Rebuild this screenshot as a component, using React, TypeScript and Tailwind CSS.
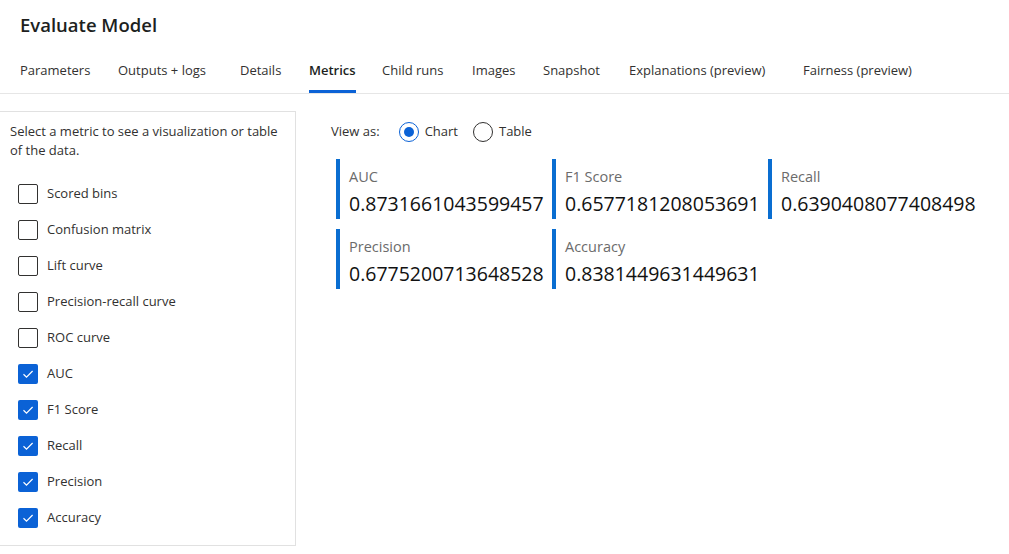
import React from "react";

// tab widths taken from the reference (text plus the space after it)
const tabs: { label: string; w: string }[] = [
  { label: "Parameters", w: "w-[98px]" },
  { label: "Outputs + logs", w: "w-[122px]" },
  { label: "Details", w: "w-[69px]" },
  { label: "Metrics", w: "w-[73px]" },
  { label: "Child runs", w: "w-[90px]" },
  { label: "Images", w: "w-[71px]" },
  { label: "Snapshot", w: "w-[86px]" },
  { label: "Explanations (preview)", w: "w-[174px]" },
  { label: "Fairness (preview)", w: "w-[140px]" },
];

const checks: { label: string; checked: boolean }[] = [
  { label: "Scored bins", checked: false },
  { label: "Confusion matrix", checked: false },
  { label: "Lift curve", checked: false },
  { label: "Precision-recall curve", checked: false },
  { label: "ROC curve", checked: false },
  { label: "AUC", checked: true },
  { label: "F1 Score", checked: true },
  { label: "Recall", checked: true },
  { label: "Precision", checked: true },
  { label: "Accuracy", checked: true },
];

const metricRows = [
  [
    { name: "AUC", value: "0.8731661043599457" },
    { name: "F1 Score", value: "0.6577181208053691" },
    { name: "Recall", value: "0.6390408077408498" },
  ],
  [
    { name: "Precision", value: "0.6775200713648528" },
    { name: "Accuracy", value: "0.8381449631449631" },
  ],
];

function Checkbox({ label, checked }: { label: string; checked: boolean }) {
  return (
    <div className="flex items-center h-[36px]">
      {checked ? (
        <span className="flex items-center justify-center w-[20px] h-[20px] rounded-[2px] bg-[#0b62d6]">
          <svg width="14" height="14" viewBox="0 0 14 14" fill="none">
            <path d="M2.5 7.3l3 2.9L11.6 4" stroke="white" strokeWidth="1.2" />
          </svg>
        </span>
      ) : (
        <span className="w-[20px] h-[20px] rounded-[2px] border border-[#323130] bg-white" />
      )}
      <span className="ml-[9px] text-[13px] text-[#323130]">{label}</span>
    </div>
  );
}

function Radio({ label, selected }: { label: string; selected: boolean }) {
  return (
    <div className="flex items-center">
      {selected ? (
        <span className="flex items-center justify-center w-[20px] h-[20px] rounded-full border border-[#0b62d6]">
          <span className="w-[10px] h-[10px] rounded-full bg-[#0b62d6]" />
        </span>
      ) : (
        <span className="w-[20px] h-[20px] rounded-full border border-[#323130]" />
      )}
      <span className="ml-[6px] text-[13px] text-[#323130]">{label}</span>
    </div>
  );
}

export default function App() {
  return (
    <div
      className="w-[1009px] h-[554px] bg-white overflow-hidden text-[#323130]"
      style={{ fontFamily: '"Open Sans", "Noto Sans", sans-serif' }}
    >
      <div className="px-[20px] pt-[11px] h-[52px]">
        <h1 className="text-[18.5px] font-semibold text-[#201f1e]">Evaluate Model</h1>
      </div>
      <div className="flex px-[20px] border-b border-[#e6e6e6] h-[42px]">
        {tabs.map((t) => (
          <div key={t.label} className={"shrink-0 " + t.w}>
            <div className="inline-flex flex-col justify-between h-full">
              <span
                className={
                  "pt-[9px] text-[13px] whitespace-nowrap " +
                  (t.label === "Metrics"
                    ? "font-semibold text-[#201f1e]"
                    : "text-[#323130]")
                }
              >
                {t.label}
              </span>
              <span
                className={
                  "h-[3px] " +
                  (t.label === "Metrics" ? "bg-[#0b62d6]" : "bg-transparent")
                }
              />
            </div>
          </div>
        ))}
      </div>
      <div className="flex pt-[17px]">
        <div className="w-[296px] h-[435px] shrink-0 border border-l-0 border-[#e1e1e1] pl-[10px] pr-[8px] pt-[10px]">
          <p className="text-[13px] leading-[19px] text-[#323130]">
            Select a metric to see a visualization or table of the data.
          </p>
          <div className="mt-[16px] pl-[8px]">
            {checks.map((c) => (
              <Checkbox key={c.label} label={c.label} checked={c.checked} />
            ))}
          </div>
        </div>
        <div className="pl-[35px] pt-[11px]">
          <div className="flex items-center h-[20px]">
            <span className="text-[13px] text-[#323130] mr-[19px]">View as:</span>
            <Radio label="Chart" selected />
            <div className="ml-[15px]">
              <Radio label="Table" selected={false} />
            </div>
          </div>
          <div className="mt-[17px] ml-[5px] flex flex-col gap-[10px]">
            {metricRows.map((row, ri) => (
              <div key={ri} className="flex">
                {row.map((m) => (
                  <div
                    key={m.name}
                    className="w-[216px] h-[60px] border-l-4 border-[#0a6ed1] pl-[9px] pt-[8px]"
                  >
                    <div className="text-[14.5px] leading-[20px] text-[#6b6b6b]">{m.name}</div>
                    <div className="mt-[3px] text-[19.5px] leading-[27px] text-[#111]">
                      {m.value}
                    </div>
                  </div>
                ))}
              </div>
            ))}
          </div>
        </div>
      </div>
    </div>
  );
}
